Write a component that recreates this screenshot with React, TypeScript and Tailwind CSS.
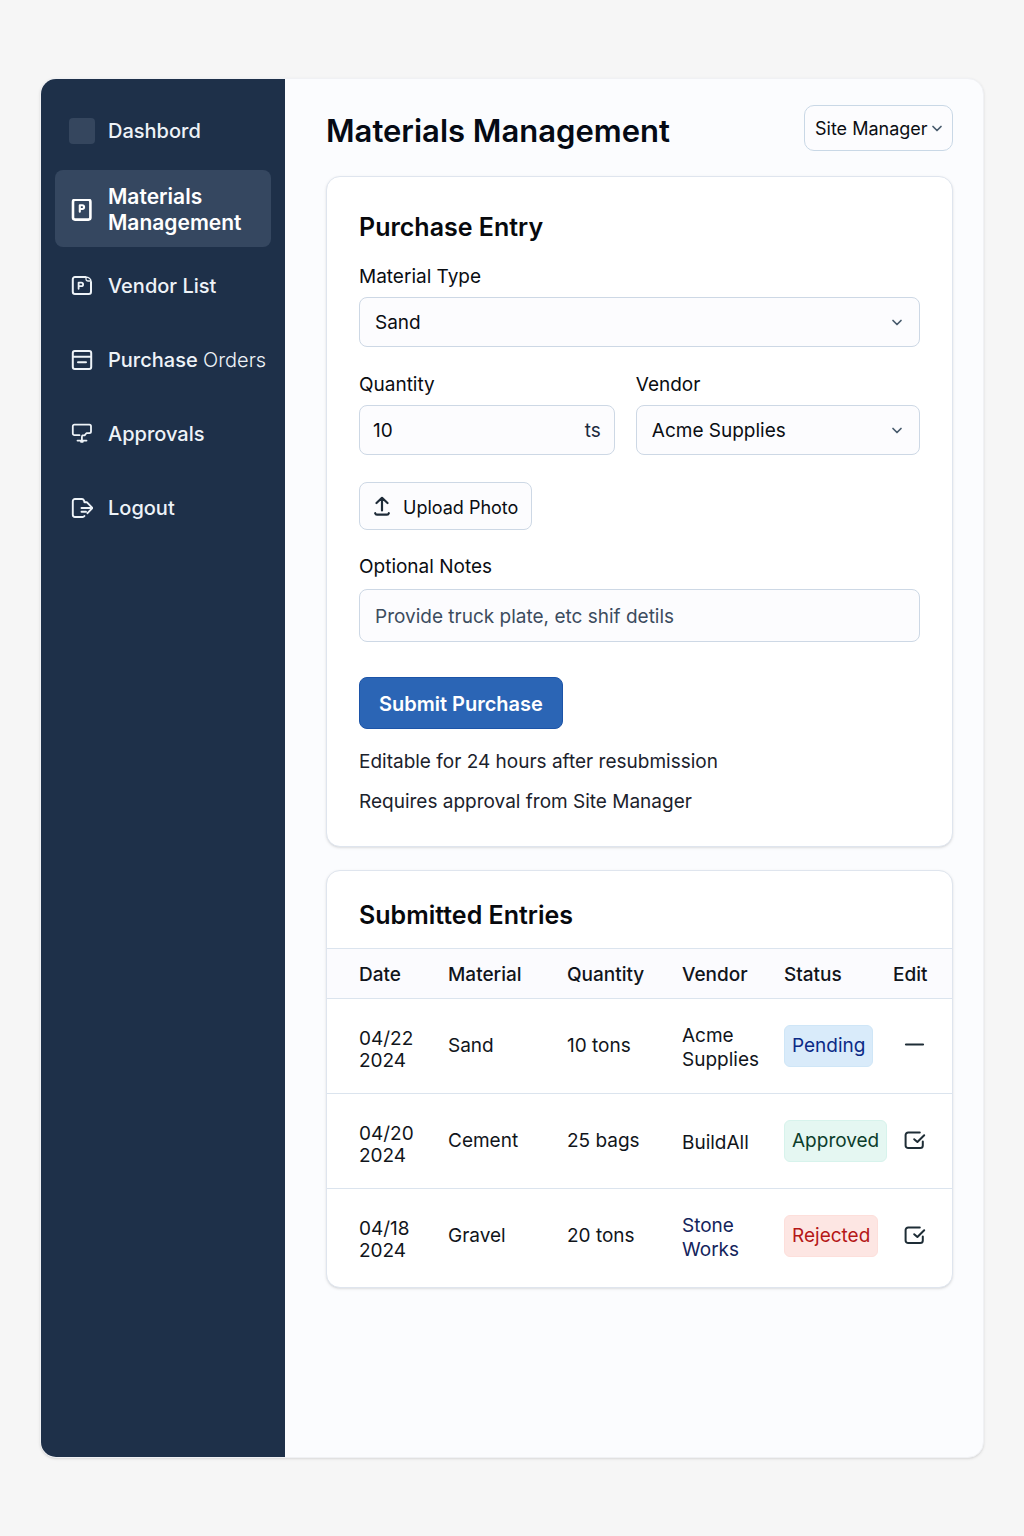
import type { ReactNode, SVGProps } from "react";

function Icon(props: SVGProps<SVGSVGElement>) {
  return (
    <svg
      viewBox="0 0 22 22"
      width="22"
      height="22"
      fill="none"
      stroke="currentColor"
      strokeWidth="2"
      strokeLinecap="round"
      strokeLinejoin="round"
      aria-hidden="true"
      className="shrink-0"
      {...props}
    />
  );
}

function MaterialsIcon() {
  return (
    <Icon strokeWidth="2.6">
      <rect x="2" y="0.800" width="17.400" height="19.800" rx="2" />
      <path d="M8.800 12.800V6.200h2.400a1.900 1.900 0 0 1 0 3.800H9" strokeWidth="2.100" />
    </Icon>
  );
}

function VendorIcon() {
  return (
    <Icon>
      <path d="M14.500 2H4A2.200 2.200 0 0 0 1.800 4.200v12.600A2.200 2.200 0 0 0 4 19h13.800a2.200 2.200 0 0 0 2.200-2.200V7" />
      <path d="M15 2.200v2a1.800 1.800 0 0 0 1.800 1.800H20c0-2-2.600-3.900-5-3.800z" strokeWidth="1.300" />
      <path d="M7.600 13.800V7.600h2.700a1.800 1.800 0 0 1 0 3.600H7.800" strokeWidth="1.800" />
    </Icon>
  );
}

function OrdersIcon() {
  return (
    <Icon>
      <rect x="1.800" y="2" width="18.400" height="18" rx="2" />
      <path d="M2.500 7.800h17M7 13.200h8" />
    </Icon>
  );
}

function ApprovalsIcon() {
  return (
    <Icon strokeWidth="1.800">
      <path d="M8.500 12.200H3.400a1.600 1.600 0 0 1-1.600-1.600V3.200a1.600 1.600 0 0 1 1.600-1.600h15A1.600 1.600 0 0 1 20 3.200v5.400a1.600 1.600 0 0 1-1.600 1.600h-3l-1.800 2.200h-2.200c-.5.400-.5 1-.5 2v2.800" />
      <path d="M6.500 17.600h9M10 18.800h1.800" />
    </Icon>
  );
}

function LogoutIcon() {
  return (
    <Icon strokeWidth="1.900">
      <path d="M13.600 5l-.8-1.800A2 2 0 0 0 11 2H4a2.200 2.200 0 0 0-2.200 2.200v13.600A2.200 2.200 0 0 0 4 20h7.600a2.200 2.200 0 0 0 1.800-1" />
      <path d="M10.500 11h11M10.500 14.800h4.500M13.600 5.200h2.200l5.700 5.800-5 5.200" />
    </Icon>
  );
}

function Chevron() {
  return (
    <svg
      viewBox="0 0 12 12"
      width="12"
      height="12"
      fill="none"
      stroke="currentColor"
      strokeWidth="1.700"
      strokeLinecap="round"
      strokeLinejoin="round"
      aria-hidden="true"
      className="self-center justify-self-end text-[#475a6c]"
    >
      <path d="M2 4.500l4 4 4-4" />
    </svg>
  );
}

function EditIcon() {
  return (
    <svg
      viewBox="0 0 22 20"
      width="22"
      height="20"
      fill="none"
      stroke="currentColor"
      strokeWidth="2"
      strokeLinecap="round"
      strokeLinejoin="round"
      aria-hidden="true"
    >
      <path d="M15.800 1.500H4.200A2.600 2.600 0 0 0 1.600 4.100v10.400a2.600 2.600 0 0 0 2.600 2.600h12a2.600 2.600 0 0 0 2.600-2.600V10.500" />
      <path d="M10.200 8.200l3.200 2.800 6.800-6.800" />
    </svg>
  );
}

function NavItem({ icon, children, active = false }: { icon: ReactNode; children: ReactNode; active?: boolean }) {
  return (
    <li>
      <a
        href="#"
        aria-current={active ? "page" : undefined}
        className={
          active
            ? "flex min-h-[77px] items-center rounded-lg bg-[#354760] pt-[2px] pl-4 text-[21px] leading-[26px] font-semibold text-white"
            : "flex min-h-[70px] items-center rounded-lg pl-4 text-[20px] leading-[26px] font-medium whitespace-nowrap text-[#eef3f8]"
        }
      >
        <span className="flex w-[37px] shrink-0">{icon}</span>
        <span>{children}</span>
      </a>
    </li>
  );
}

const fieldBox = "rounded-lg border border-[#cdd8e5] bg-[#fcfcfe]";
const labelText = "block text-[19px] leading-6 text-[#0a0d12]";

function SelectField({ id, label, options }: { id: string; label: string; options: string[] }) {
  return (
    <div>
      <label htmlFor={id} className={labelText}>
        {label}
      </label>
      <div className="mt-2 grid">
        <select
          id={id}
          className={`${fieldBox} col-start-1 row-start-1 h-[50px] w-full appearance-none pt-[2px] pr-10 pl-[15px] text-[19px] text-[#0a0d12]`}
        >
          {options.map((o) => (
            <option key={o}>{o}</option>
          ))}
        </select>
        <div className="pointer-events-none col-start-1 row-start-1 grid pr-[17px]">
          <Chevron />
        </div>
      </div>
    </div>
  );
}

const badgeStyles = {
  Pending: "border-[#cfe6f7] bg-[#d9ebfa] text-[#0b2a86]",
  Approved: "border-[#d7f3ec] bg-[#e5f7f2] text-[#0c3d2b]",
  Rejected: "border-[#fddfdb] bg-[#fde6e3] text-[#b51717]",
};

type Entry = {
  date: string;
  year: string;
  material: string;
  quantity: string;
  vendor: string;
  status: keyof typeof badgeStyles;
  editable: boolean;
};

const entries: Entry[] = [
  { date: "04/22", year: "2024", material: "Sand", quantity: "10 tons", vendor: "Acme Supplies", status: "Pending", editable: false },
  { date: "04/20", year: "2024", material: "Cement", quantity: "25 bags", vendor: "BuildAll", status: "Approved", editable: true },
  { date: "04/18", year: "2024", material: "Gravel", quantity: "20 tons", vendor: "Stone Works", status: "Rejected", editable: true },
];

function PurchaseEntry() {
  return (
    <section className="rounded-[14px] border border-[#dfe5ee] bg-white p-8 shadow-sm">
      <h2 className="text-[25px] leading-9 font-semibold text-[#07090d]">Purchase Entry</h2>
      <form className="mt-5" onSubmit={(e) => e.preventDefault()}>
        <SelectField id="material" label="Material Type" options={["Sand", "Cement", "Gravel"]} />
        <div className="mt-[26px] grid grid-cols-[9fr_10fr] gap-[21px]">
          <div>
            <label htmlFor="quantity" className={labelText}>
              Quantity
            </label>
            <div className={`${fieldBox} mt-2 flex h-[50px] items-center px-[13px] pt-[2px] text-[19px]`}>
              <input id="quantity" defaultValue="10" className="w-full min-w-0 bg-transparent text-[#0a0d12] outline-none" />
              <span className="text-[#1d2b3f]">ts</span>
            </div>
          </div>
          <SelectField id="vendor" label="Vendor" options={["Acme Supplies", "BuildAll", "Stone Works"]} />
        </div>
        <button
          type="button"
          className={`${fieldBox} mt-[27px] flex h-12 items-center gap-[11px] pt-[2px] pr-[13px] pl-3 text-[18px] text-[#0a0d12]`}
        >
          <svg viewBox="0 0 20 22" width="20" height="22" fill="none" stroke="#1e2b38" strokeWidth="2.200" strokeLinecap="round" strokeLinejoin="round" aria-hidden="true">
            <path d="M10 14.500V2M4.500 7L10 1.800 15.500 7M3.200 17.200c.3 1.200.8 1.500 1.800 1.500h10c1 0 1.500-.3 1.800-1.500" />
          </svg>
          Upload Photo
        </button>
        <label htmlFor="notes" className={`${labelText} mt-[25px]`}>
          Optional Notes
        </label>
        <input
          id="notes"
          placeholder="Provide truck plate, etc shif detils"
          className={`${fieldBox} mt-[10px] h-[53px] w-full px-[15px] pt-[2px] text-[19px] text-[#0a0d12] placeholder:text-[#3c4c5e]`}
        />
        <button
          type="submit"
          className="mt-[35px] block h-[52px] rounded-lg border border-[#1c54a8] bg-[#2b65b5] px-[19px] pt-[2px] text-[20px] font-semibold text-white"
        >
          Submit Purchase
        </button>
      </form>
      <p className="mt-[21px] text-[19px] leading-6 text-[#1b222c]">Editable for 24 hours after resubmission</p>
      <p className="mt-4 text-[19px] leading-6 text-[#1b222c]">Requires approval from Site Manager</p>
    </section>
  );
}

function SubmittedEntries() {
  return (
    <section className="mt-[23px] overflow-hidden rounded-[14px] border border-[#dfe5ee] bg-white shadow-sm">
      <h2 className="px-8 pt-[26px] pb-[15px] text-[25px] leading-9 font-semibold text-[#07090d]">Submitted Entries</h2>
      <table className="w-full table-fixed text-left text-[19px] text-[#11151b]">
        <colgroup>
          <col className="w-[121px]" />
          <col className="w-[119px]" />
          <col className="w-[115px]" />
          <col className="w-[102px]" />
          <col className="w-[109px]" />
          <col className="w-[59px]" />
        </colgroup>
        <thead>
          <tr className="h-[50px] border-y border-[#dbe4ee] bg-[#fbfbfe]">
            <th className="pt-1 pl-8 font-medium">Date</th>
            <th className="pt-1 font-medium">Material</th>
            <th className="pt-1 font-medium">Quantity</th>
            <th className="pt-1 font-medium">Vendor</th>
            <th className="pt-1 font-medium">Status</th>
            <th className="pt-1 font-medium">Edit</th>
          </tr>
        </thead>
        <tbody>
          {entries.map((e) => (
            <tr key={e.date} className="h-[95px] border-t border-[#dbe4ee]">
              <td className="pt-2 pl-8 leading-[22px]">
                {e.date}
                <br />
                {e.year}
              </td>
              <td>{e.material}</td>
              <td>{e.quantity}</td>
              <td className={e.status === "Rejected" ? "pt-1 pr-5 leading-6 text-[#14245c]" : "pt-1 pr-5 leading-6"}>{e.vendor}</td>
              <td>
                <span className={`${badgeStyles[e.status]} inline-block rounded-md border px-[7px] py-[7px] leading-[26px]`}>{e.status}</span>
              </td>
              <td className="pl-[11px] text-[#1e2d36]">
                {e.editable ? (
                  <button type="button" aria-label={`Edit ${e.material}`} className="block">
                    <EditIcon />
                  </button>
                ) : (
                  <svg viewBox="0 0 22 20" width="22" height="20" stroke="currentColor" strokeWidth="2.200" strokeLinecap="round" aria-hidden="true">
                    <path d="M2 8.500h17" />
                  </svg>
                )}
              </td>
            </tr>
          ))}
        </tbody>
      </table>
      <div className="h-[3px]" />
    </section>
  );
}

export default function App() {
  return (
    <div className="flex min-h-screen bg-[#f6f6f6] px-10 py-[78px] font-['Inter',sans-serif]">
      <div className="flex w-full overflow-hidden rounded-2xl border border-[#f0f1f4] bg-[#fbfcfe] shadow-sm">
        <nav aria-label="Main" className="w-[244px] shrink-0 bg-[#1e3049] px-[14px] pt-[17px]">
          <ul className="flex flex-col gap-1">
            <NavItem icon={<span className="-ml-[2px] size-[26px] rounded bg-[#35465e]" />}>Dashbord</NavItem>
            <NavItem icon={<MaterialsIcon />} active>
              Materials Management
            </NavItem>
            <NavItem icon={<VendorIcon />}>Vendor List</NavItem>
            <NavItem icon={<OrdersIcon />}>
              Purchase <span className="font-light">Orders</span>
            </NavItem>
            <NavItem icon={<ApprovalsIcon />}>Approvals</NavItem>
            <NavItem icon={<LogoutIcon />}>Logout</NavItem>
          </ul>
        </nav>
        <main className="min-w-0 flex-1 pt-[26px] pr-[30px] pl-[41px]">
          <header className="mb-[25px] flex items-center justify-between">
            <h1 className="pt-[6px] text-[31px] leading-10 font-semibold text-[#050a14]">Materials Management</h1>
            <div className="grid">
              <select
                aria-label="Role"
                className="col-start-1 row-start-1 h-[46px] w-[149px] appearance-none rounded-[10px] border border-[#c9d8e6] bg-[#fcfcfe] pl-[10px] text-[18px] text-[#0a0d12]"
              >
                <option>Site Manager</option>
                <option>Purchaser</option>
              </select>
              <div className="pointer-events-none col-start-1 row-start-1 grid pr-[10px]">
                <Chevron />
              </div>
            </div>
          </header>
          <PurchaseEntry />
          <SubmittedEntries />
        </main>
      </div>
    </div>
  );
}
